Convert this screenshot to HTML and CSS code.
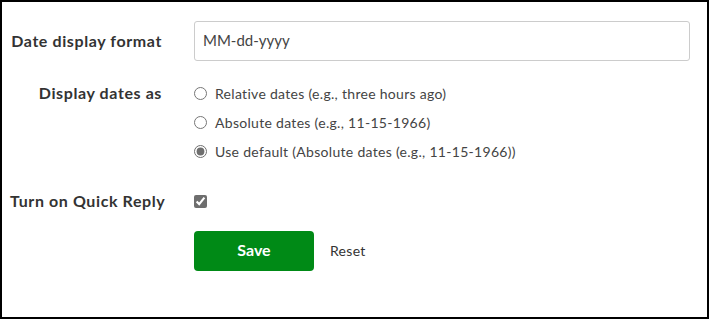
FILE: index.html
```html
<!DOCTYPE html>
<html lang="en">
<head>
<meta charset="utf-8">
<title>Preferences</title>
<link rel="stylesheet" href="styles.css">
</head>
<body>
<form class="frame">
  <div class="row row-date">
    <label class="label" for="datefmt">Date display format</label>
    <input class="text-input" id="datefmt" type="text" value="MM-dd-yyyy">
  </div>
  <div class="row row-display">
    <div class="label">Display dates as</div>
    <div class="options">
      <label class="option"><input type="radio" name="dates" class="radio"><span>Relative dates (e.g., three hours ago)</span></label>
      <label class="option"><input type="radio" name="dates" class="radio"><span>Absolute dates (e.g., 11-15-1966)</span></label>
      <label class="option"><input type="radio" name="dates" class="radio" checked><span>Use default (Absolute dates (e.g., 11-15-1966))</span></label>
    </div>
  </div>
  <div class="row row-quick">
    <label class="label" for="quick">Turn on Quick Reply</label>
    <div class="check-wrap"><input type="checkbox" id="quick" class="checkbox" checked></div>
  </div>
  <div class="row row-actions">
    <div></div>
    <div class="actions">
      <button type="button" class="btn-save">Save</button>
      <a class="reset" href="#">Reset</a>
    </div>
  </div>
</form>
</body>
</html>
```
FILE: styles.css
```css
html, body {
  margin: 0;
  padding: 0;
  background: #fff;
}
.frame {
  box-sizing: border-box;
  width: 709px;
  height: 319px;
  border: 2px solid #000;
  padding: 19px 17px 0 8px;
  font-family: Lato, "Open Sans", sans-serif;
  color: #333;
}
.row {
  display: grid;
  grid-template-columns: 153px 1fr;
  column-gap: 31px;
  align-items: center;
}
.label {
  text-align: right;
  font-weight: 700;
  font-size: 16px;
  letter-spacing: 0.6px;
  color: #333;
  white-space: nowrap;
  margin-right: 1px;
  padding-bottom: 2px;
}
.row-date {
  height: 40px;
  margin-bottom: 18px;
}
.text-input {
  box-sizing: border-box;
  height: 40px;
  width: 100%;
  border: 1px solid #ccc;
  border-radius: 3px;
  padding: 0 8px 2px;
  font-family: inherit;
  font-size: 15px;
  color: #444;
  outline: none;
}
.row-display {
  align-items: start;
  margin-bottom: 21px;
}
.row-display .label {
  line-height: 29px;
  padding-bottom: 0;
  margin-top: -1px;
}
.options {
  display: flex;
  flex-direction: column;
}
.option {
  display: flex;
  align-items: center;
  gap: 8px;
  height: 29px;
  font-size: 14px;
  letter-spacing: 0.3px;
  color: #444;
}
.radio, .checkbox {
  margin: 0;
  width: 13px;
  height: 13px;
  accent-color: #6e6e6e;
}
.row-quick {
  height: 29px;
  margin-bottom: 15px;
}
.check-wrap {
  display: flex;
  align-items: center;
}
.actions {
  display: flex;
  align-items: center;
}
.btn-save {
  width: 120px;
  height: 40px;
  border: 0;
  border-radius: 4px;
  background: #008a16;
  color: #fff;
  font-family: inherit;
  font-weight: 700;
  font-size: 16px;
  padding: 0 0 3px;
}
.reset {
  margin-left: 16px;
  font-size: 14px;
  letter-spacing: 0.3px;
  color: #333;
  text-decoration: none;
  padding-bottom: 2px;
}
```
